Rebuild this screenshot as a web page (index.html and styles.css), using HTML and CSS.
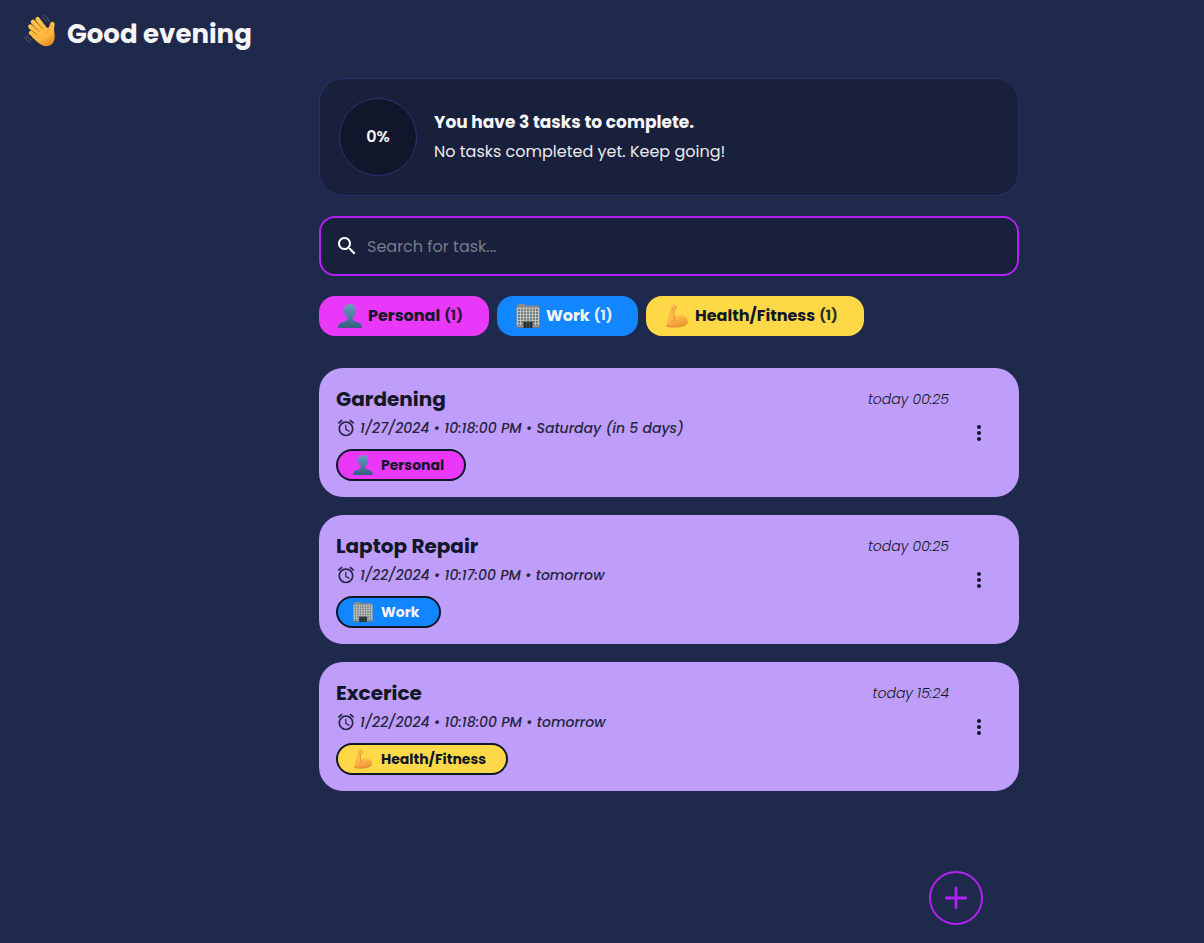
FILE: index.html
```html
<!DOCTYPE html>
<html lang="en">
<head>
<meta charset="utf-8">
<title>Tasks</title>
<link rel="stylesheet" href="styles.css">
</head>
<body>
<svg class="defs" width="0" height="0" aria-hidden="true">
  <defs>
    <linearGradient id="bust" x1="0" y1="0" x2="0" y2="1"><stop offset="0" stop-color="#6c9cc0"/><stop offset="1" stop-color="#355f82"/></linearGradient>
    <linearGradient id="skin" gradientUnits="userSpaceOnUse" x1="8" y1="4" x2="24" y2="32"><stop offset="0" stop-color="#ffc94d"/><stop offset="0.7" stop-color="#ffb73c"/><stop offset="1" stop-color="#ea8a25"/></linearGradient>
    <linearGradient id="arm" x1="0" y1="0" x2="0.3" y2="1"><stop offset="0" stop-color="#ffc34e"/><stop offset="0.7" stop-color="#ffb646"/><stop offset="1" stop-color="#f09a35"/></linearGradient>
  </defs>
  <symbol id="i-person" viewBox="0 0 24 24">
    <path fill="url(#bust)" d="M12 0C8.200 0 5.900 2.700 6 6.500c.1 3 1.200 5.700 3 7.300.5.500.6 2.200-.2 2.800C6.600 18 1.600 18.200.5 21.200.2 22 0 23 0 24h24c0-1-.2-2-.5-2.800-1.100-3-6.100-3.200-8.300-4.600-.8-.6-.7-2.300-.2-2.800 1.800-1.600 2.900-4.300 3-7.300C18.100 2.700 15.800 0 12 0z"/>
  </symbol>
  <symbol id="i-office" viewBox="0 0 24 24">
    <path fill="#8b8c8e" d="M2 0h7v1.500h14v2H1v-2h1z"/>
    <path fill="#93979a" d="M.5 3h23v20.500H.5z"/>
    <path fill="#627985" d="M1.500 4.500h21V21h-21z"/>
    <path stroke="#b9b8ab" stroke-width="1.200" d="M1 4.500h22M1 7.500h22M1 10.500h22M1 13.500h22M1 16.500h22M1 19.500h22"/>
    <path stroke="#c6c4b6" stroke-width="1.200" d="M1.500 4v17M4.500 4v17M7.500 4v14M10.500 4v12M13.500 4v12M16.500 4v14M19.500 4v17M22.500 4v17"/>
    <path fill="#70736f" d="M7 16.800h10v2H7z"/><path fill="#242d32" d="M7.500 18h9v6h-9z"/>
    <path stroke="#66777e" stroke-width=".6" d="M10.500 18v6M13.500 18v6"/>
    <path stroke="#6e716f" stroke-width="1" d="M0 23.500h7.500M16.500 23.500H24"/>
  </symbol>
  <symbol id="i-muscle" viewBox="0 0 24 24">
    <path fill="url(#arm)" d="M5.300 3.300C6 1.500 7.500.6 9.300.3c1.700-.2 3 .7 3.300 2.200.3 1.600-.5 3.200-1.800 3.700-.7.200-1.400 0-1.700-.4-.4 2.700-.1 5.500 1 8 1.800-2.400 4.600-3.300 7.600-2.500 3.300 1 5.200 3.400 5 6.400C22.500 21 18 22.600 12 23c-4.500.2-8 .2-10.800-.8 1.500-4.500 2.600-12.700 4.100-18.900z"/>
    <path fill="none" stroke="#d08433" stroke-width=".8" stroke-linecap="round" d="M9.100 5.800C8 6 7.300 5.400 7.300 4.500M9.300 2.500c1 .3 1.700.8 1.800 1.700M8.800 6.300C8.500 10 9 13 10.200 14c-.7 1.200-1 2-1 3M2 22.300c4 1.100 9 .9 13 .3 4-.6 6.300-1.700 7.300-3.600"/>
  </symbol>
  <symbol id="i-alarm" viewBox="0 0 24 24">
    <path d="M12.500 8H11v6l4.750 2.850.75-1.230-4-2.370zM17.337 1.810l4.607 3.845-1.280 1.535-4.610-3.843zM6.663 1.810l1.281 1.536L3.337 7.190 2.056 5.654zM12 4c-4.970 0-9 4.030-9 9s4.030 9 9 9 9-4.030 9-9-4.030-9-9-9zm0 16c-3.860 0-7-3.140-7-7s3.140-7 7-7 7 3.140 7 7-3.140 7-7 7z"/>
  </symbol>
  <symbol id="i-more" viewBox="0 0 24 24">
    <path d="M12 8c1.100 0 2-.9 2-2s-.9-2-2-2-2 .9-2 2 .9 2 2 2zm0 2c-1.100 0-2 .9-2 2s.9 2 2 2 2-.9 2-2-.9-2-2-2zm0 6c-1.100 0-2 .9-2 2s.9 2 2 2 2-.9 2-2-.9-2-2-2z"/>
  </symbol>
</svg>

<header class="greeting">
  <svg class="wave" viewBox="0 0 34 34">
    <g fill="none" stroke="url(#skin)" stroke-width="4.400" stroke-linecap="round"><path d="M13.500 5.200L21.500 15.500"/><path d="M8.900 7.800L18 18"/><path d="M6.300 12.500L16 21"/><path d="M7 18.900L15 25"/></g>
    <path fill="url(#skin)" d="M20 12.500l3.600 1.500c1.100-.2 1.800-1.400 2.100-3 .4-2.400 1.800-3.600 3.300-3.100 1.600.5 1.900 1.800 1.500 3.700-.5 2.700-.5 4.600-.1 7.200.6 4.200.5 8.600-2.400 11.200-3.600 3.200-8.800 2.600-12.400-.3-2.500-2-5.600-4.700-8-7z"/>
    <path fill="none" stroke="#bd7420" stroke-width=".8" stroke-linecap="round" d="M7.500 16.400l5.300 4.200M7.800 10.600l7.400 6.900M12.200 7.800l6.600 7.300"/>
    <path fill="none" stroke="#d58c2b" stroke-width=".6" stroke-linecap="round" d="M25.500 15.500c-1.900.9-3 2.300-3.100 4"/>
    <path fill="none" stroke="#585f70" stroke-width="1" stroke-linecap="round" d="M18.300 3.200c2 1.200 3.300 2.700 4.200 4.900M20.300 1.200c2.300 1.500 3.700 3.300 4.500 5.900M2.900 21.500c.8 1.900 2.300 3.400 4.300 4.500M.9 23.200c1 2.200 2.600 3.900 4.800 5"/>
  </svg>
  <h1 class="greeting-text">Good evening</h1>
</header>

<main class="content">
  <section class="progress">
    <div class="ring">0%</div>
    <div class="progress-text">
      <p class="progress-title">You have 3 tasks to complete.</p>
      <p class="progress-note">No tasks completed yet. Keep going!</p>
    </div>
  </section>

  <div class="search">
    <svg class="search-icon" viewBox="0 0 24 24"><path d="M15.500 14h-.79l-.28-.27C15.410 12.590 16 11.110 16 9.500 16 5.910 13.090 3 9.500 3S3 5.910 3 9.500 5.910 16 9.500 16c1.610 0 3.090-.59 4.230-1.570l.27.28v.79l5 4.990L20.490 19l-4.990-5zm-6 0C7.010 14 5 11.990 5 9.500S7.010 5 9.500 5 14 7.010 14 9.500 11.990 14 9.500 14z"/></svg>
    <span class="search-hint">Search for task...</span>
  </div>

  <nav class="filters">
    <div class="filter personal"><svg class="filter-icon"><use href="#i-person"/></svg><span class="filter-name">Personal</span><span class="count">(1)</span></div>
    <div class="filter work"><svg class="filter-icon"><use href="#i-office"/></svg><span class="filter-name">Work</span><span class="count">(1)</span></div>
    <div class="filter health"><svg class="filter-icon"><use href="#i-muscle"/></svg><span class="filter-name">Health/Fitness</span><span class="count">(1)</span></div>
  </nav>

  <section class="tasks">
    <article class="task">
      <div class="task-body">
        <div class="task-head"><h2 class="task-title">Gardening</h2><time class="created">today 00:25</time></div>
        <div class="due"><svg class="alarm"><use href="#i-alarm"/></svg><span class="due-text">1/27/2024 • 10:18:00 PM • Saturday (in 5 days)</span></div>
        <div class="chip personal"><svg class="chip-icon"><use href="#i-person"/></svg><span class="chip-name">Personal</span></div>
      </div>
      <svg class="more"><use href="#i-more"/></svg>
    </article>
    <article class="task">
      <div class="task-body">
        <div class="task-head"><h2 class="task-title">Laptop Repair</h2><time class="created">today 00:25</time></div>
        <div class="due"><svg class="alarm"><use href="#i-alarm"/></svg><span class="due-text">1/22/2024 • 10:17:00 PM • tomorrow</span></div>
        <div class="chip work"><svg class="chip-icon"><use href="#i-office"/></svg><span class="chip-name">Work</span></div>
      </div>
      <svg class="more"><use href="#i-more"/></svg>
    </article>
    <article class="task">
      <div class="task-body">
        <div class="task-head"><h2 class="task-title">Excerice</h2><time class="created">today 15:24</time></div>
        <div class="due"><svg class="alarm"><use href="#i-alarm"/></svg><span class="due-text">1/22/2024 • 10:18:00 PM • tomorrow</span></div>
        <div class="chip health"><svg class="chip-icon"><use href="#i-muscle"/></svg><span class="chip-name">Health/Fitness</span></div>
      </div>
      <svg class="more"><use href="#i-more"/></svg>
    </article>
  </section>
</main>

<div class="add"><svg class="add-icon" viewBox="0 0 26 26"><path d="M13 3.200v19.600M3.200 13h19.600"/></svg></div>
</body>
</html>
```

FILE: styles.css
```css
* { box-sizing: border-box; }
body {
  margin: 0;
  height: 943px;
  overflow: hidden;
  background: #1f294b;
  color: #f5f5f7;
  font-family: Poppins, Inter, "Open Sans", sans-serif;
}
h1, h2, p { margin: 0; }
.defs { display: block; height: 0; }

.greeting { display: flex; height: 78px; padding: 14px 0 0 24px; gap: 9px; }
.wave { width: 34px; height: 34px; overflow: visible; }
.greeting-text { font-size: 26px; line-height: 40px; font-weight: 700; white-space: nowrap; }

.content { width: 700px; margin-left: 319px; }

.progress {
  display: flex; align-items: center; gap: 17px;
  height: 118px; padding-left: 19px;
  border: 1px solid #2b2f6b; border-radius: 24px; background: #19203b;
}
.ring {
  display: flex; align-items: center; justify-content: center;
  width: 78px; height: 78px; padding-bottom: 2px; border: 1px solid #2f3077; border-radius: 50%;
  background: #11162a; font-size: 16px; font-weight: 600;
}
.progress-text { padding-bottom: 1px; }
.progress-title { font-size: 17px; line-height: 30px; font-weight: 700; }
.progress-note { font-size: 16px; line-height: 29px; opacity: .95; }

.search {
  display: flex; align-items: center; gap: 8px;
  height: 60px; margin-top: 20px; padding-left: 14px;
  border: 2px solid #b321f5; border-radius: 16px; background: #19203b;
}
.search-icon { width: 24px; height: 24px; fill: #fff; }
.search-hint { color: #777b8a; font-size: 16px; }

.filters { display: flex; gap: 8px; margin-top: 20px; }
.filter {
  display: flex; align-items: center; height: 40px;
  padding-left: 19px; border-radius: 16px; white-space: nowrap;
}
.filter.personal { width: 170px; }
.filter.work { width: 141px; }
.filter.health { width: 218px; }
.filter-icon { width: 24px; height: 24px; margin-right: 6px; }
.filter-name { padding-bottom: 2px; font-size: 16px; font-weight: 700; }
.count { margin-left: 4px; padding-bottom: 1px; font-size: 14px; font-weight: 700; opacity: .9; }
.personal { background: #ea38fb; color: #101727; }
.work { background: #1186ff; color: #f5f5f7; }
.health { background: #ffd848; color: #101727; }

.tasks { display: flex; flex-direction: column; gap: 18px; margin-top: 32px; }
.task {
  display: flex; align-items: center; height: 129px; padding: 0 28px 0 17px;
  border-radius: 24px; background: #be9dfb; color: #101727;
}
.task-body { width: 613px; margin-right: 18px; }
.task-head { display: flex; justify-content: space-between; height: 30px; }
.task-title { font-size: 20px; line-height: 30px; font-weight: 700; }
.created { font-size: 14px; line-height: 30px; font-style: italic; font-weight: 300; }
.due { display: flex; align-items: center; height: 24px; margin-top: 2px; gap: 4px; }
.alarm { width: 20px; height: 20px; fill: #252642; }
.due-text { font-size: 14px; font-style: italic; font-weight: 500; color: #252642; white-space: nowrap; }
.chip {
  display: flex; align-items: center; height: 32px; margin-top: 9px; padding-left: 15px;
  border: 2px solid #101727; border-radius: 16px;
}
.chip.personal { width: 130px; }
.chip.work { width: 105px; }
.chip.health { width: 172px; }
.chip-icon { width: 20px; height: 20px; margin-right: 8px; }
.chip-name { font-size: 14px; font-weight: 700; }
.more { width: 24px; height: 24px; fill: #101727; }

.add {
  position: fixed; left: 929px; top: 871px; width: 54px; height: 54px;
  display: flex; align-items: center; justify-content: center;
  border: 2px solid #b321f5; border-radius: 50%;
}
.add-icon { width: 26px; height: 26px; fill: none; stroke: #b321f5; stroke-width: 2.800; stroke-linecap: round; }
```
